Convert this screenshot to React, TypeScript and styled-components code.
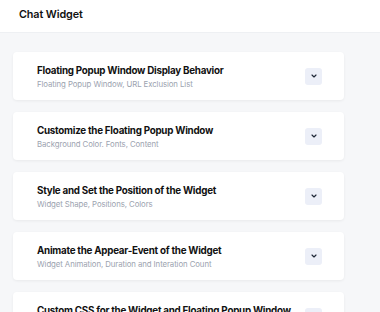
import React from "react";
import styled, { createGlobalStyle } from "styled-components";

const sections = [
	{ title: "Floating Popup Window Display Behavior", sub: "Floating Popup Window, URL Exclusion List" },
	{ title: "Customize the Floating Popup Window", sub: "Background Color. Fonts, Content" },
	{ title: "Style and Set the Position of the Widget", sub: "Widget Shape, Positions, Colors" },
	{ title: "Animate the Appear-Event of the Widget", sub: "Widget Animation, Duration and Interation Count" },
	{ title: "Custom CSS for the Widget and Floating Popup Window", sub: "Custom CSS" },
];

const Chevron = () => (
	<svg width="8" height="8" viewBox="0 0 24 24" fill="none" stroke="#1f2937" strokeWidth="3.5" strokeLinecap="round" strokeLinejoin="round">
		<path d="M6 9l6 6 6-6" />
	</svg>
);

const App = () => (
	<>
		<GlobalStyle />
		<Page>
			<Header>Chat Widget</Header>
			<Body>
				{sections.map((s) => (
					<Card key={s.title}>
						<Text>
							<Title>{s.title}</Title>
							<Sub>{s.sub}</Sub>
						</Text>
						<Toggle>
							<Chevron />
						</Toggle>
					</Card>
				))}
			</Body>
		</Page>
	</>
);

const GlobalStyle = createGlobalStyle`
	body {
		margin: 0;
		font-family: Inter, "Liberation Sans", sans-serif;
		background: #f6f7f9;
		overflow: hidden;
	}
`;
const Page = styled.div`
	width: 380px;
	height: 312px;
	overflow: hidden;
`;
const Header = styled.div`
	height: 33px;
	background: #fff;
	border-bottom: 1px solid #eef0f3;
	box-sizing: border-box;
	padding: 0 0 4px 19px;
	display: flex;
	align-items: center;
	font-size: 10.8px;
	font-weight: 600;
	letter-spacing: -0.1px;
	color: #111;
`;
const Body = styled.div`
	display: flex;
	flex-direction: column;
	gap: 12px;
	padding: 19px 36px 0 13px;
`;
const Card = styled.div`
	height: 48px;
	flex-shrink: 0;
	background: #fff;
	border-radius: 4px;
	box-shadow: 0 1px 3px rgba(0, 0, 0, 0.06);
	display: flex;
	align-items: center;
	justify-content: space-between;
	padding: 0 22px 0 24px;
`;
const Text = styled.div`
	display: flex;
	flex-direction: column;
	gap: 3px;
	white-space: nowrap;
	padding-top: 2px;
`;
const Title = styled.div`
	font-size: 9.8px;
	font-weight: 700;
	letter-spacing: -0.25px;
	color: #111;
`;
const Sub = styled.div`
	font-size: 7.8px;
	letter-spacing: -0.08px;
	color: #9ca3af;
`;
const Toggle = styled.div`
	width: 17px;
	height: 17px;
	flex-shrink: 0;
	border-radius: 3px;
	background: #eceff8;
	display: flex;
	align-items: center;
	justify-content: center;
`;

export default App;
